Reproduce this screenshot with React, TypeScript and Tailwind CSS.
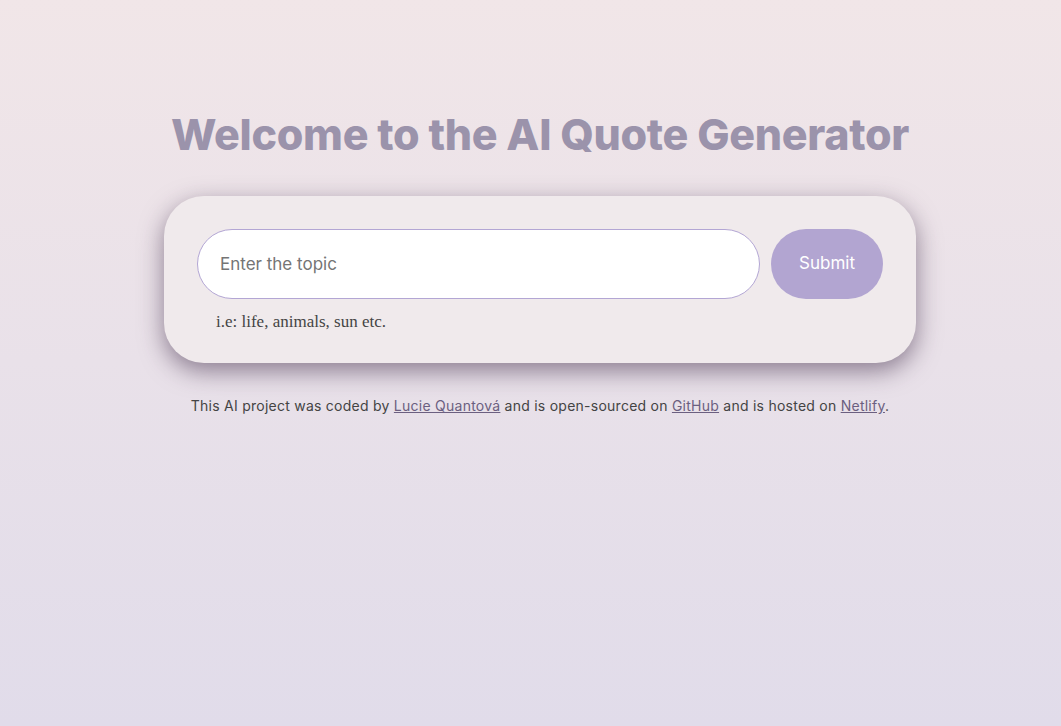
const App = () => {
  return (
    <div
      className="min-h-[726px] w-full bg-gradient-to-b from-[#f1e6e8] to-[#e1dcea] pl-[19px] flex flex-col items-center"
      style={{ fontFamily: "Inter, 'Open Sans', sans-serif" }}
    >
      <h1 className="mt-[106px] text-[43px] leading-[56px] font-extrabold tracking-[-0.3px] text-[#9b93ab]">
        Welcome to the AI Quote Generator
      </h1>

      <div className="mt-[34px] w-[752px] rounded-[40px] bg-[#f0eaec] px-[33px] pt-[33px] pb-[31px] shadow-[0_8px_24px_rgba(60,40,70,0.55)]">
        <form className="flex gap-[11px]" onSubmit={(e) => e.preventDefault()}>
          <input
            type="text"
            placeholder="Enter the topic"
            className="h-[70px] flex-1 rounded-full border border-[#b3a6d4] bg-white px-[22px] text-[17px] text-[#333] placeholder:text-[#757575] outline-none"
          />
          <button
            type="submit"
            className="h-[70px] w-[112px] rounded-full bg-[#b2a5d1] text-[17px] text-white"
          >
            Submit
          </button>
        </form>
        <div
          className="mt-[12px] pl-[19px] text-[17px] leading-[21px] text-[#444]"
          style={{ fontFamily: "'Liberation Serif', serif" }}
        >
          i.e: life, animals, sun etc.
        </div>
      </div>

      <p className="mt-[32px] text-[14px] tracking-[0.25px] text-[#444]">
        This AI project was coded by{" "}
        <a href="#" className="underline text-[#6b5f80]">Lucie Quantová</a>{" "}
        and is open-sourced on{" "}
        <a href="#" className="underline text-[#6b5f80]">GitHub</a>{" "}
        and is hosted on{" "}
        <a href="#" className="underline text-[#6b5f80]">Netlify</a>.
      </p>
    </div>
  );
};

export default App;
